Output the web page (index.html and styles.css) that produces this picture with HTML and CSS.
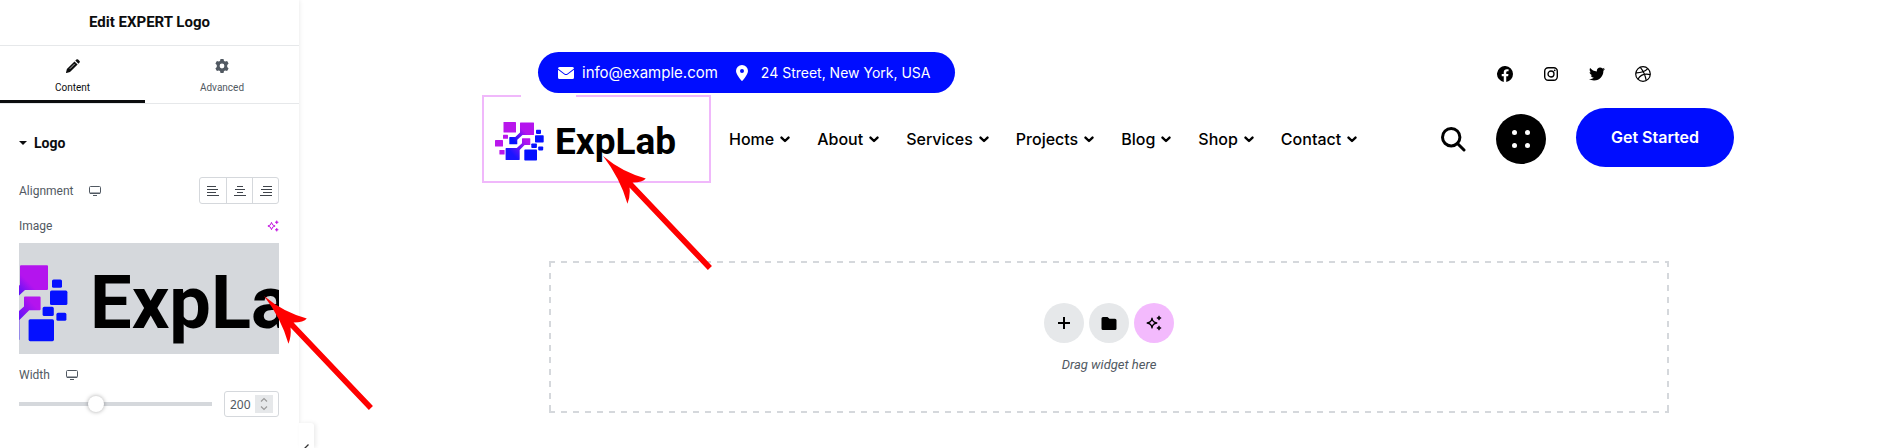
FILE: index.html
```html
<!DOCTYPE html>
<html lang="en">
<head>
<meta charset="utf-8">
<title>Edit EXPERT Logo</title>
<link rel="stylesheet" href="styles.css">
</head>
<body>
<svg class="defs" width="0" height="0" aria-hidden="true">
  <defs>
    <linearGradient id="link" gradientUnits="userSpaceOnUse" x1="510" y1="144" x2="527" y2="127"><stop offset=".2" stop-color="#0510ff"/><stop offset=".8" stop-color="#b414ee"/></linearGradient>
    <linearGradient id="link2" gradientUnits="userSpaceOnUse" x1="511" y1="156" x2="529" y2="139"><stop offset=".1" stop-color="#1b14ff"/><stop offset=".85" stop-color="#b414ee"/></linearGradient>
    <symbol id="logo" viewBox="492 110 186 60" overflow="visible">
      <g fill="#b917ec">
        <rect x="503.5" y="122" width="12.5" height="10.5" rx=".6"/>
        <rect x="503" y="134.8" width="5" height="4" rx=".6"/>
        <rect x="495" y="140" width="8" height="6.5" rx=".6"/>
        <rect x="499.4" y="150" width="5.2" height="4.6" rx=".6"/>
      </g>
      <path fill="url(#link)" d="M520.5 122.6H533.5Q534 122.6 534 123.1V134.4Q534 135 533.5 135H522.5L517.3 139.8V143.8Q517.3 144.3 516.8 144.3H509.8Q509.3 144.3 509.3 143.8V137.5Q509.3 137 509.8 137H515.3L520 132.4V123.1Q520 122.6 520.5 122.6Z"/>
      <path fill="url(#link2)" d="M522.5 138.3H529.8Q530.3 138.3 530.3 138.8V144.6Q530.3 145.1 529.8 145.1H524.6L519.7 150V159.6Q519.7 160 519.2 160H506.1Q505.6 160 505.6 159.5V148.5Q505.6 148 506.1 148H516.8L522 143.2V138.8Q522 138.3 522.5 138.3Z"/>
      <g fill="#0510ff">
        <rect x="536" y="129.7" width="5" height="4.2" rx=".8"/>
        <rect x="535" y="135.3" width="8.7" height="7.2" rx=".8"/>
        <rect x="531.3" y="143.4" width="5.6" height="4.6" rx=".8"/>
        <rect x="538.2" y="146.4" width="5" height="4" rx=".8"/>
        <rect x="524.3" y="149.6" width="12.7" height="11" rx=".8"/>
      </g>
      <text class="logo-text" x="555" y="154">ExpLab</text>
    </symbol>
    <symbol id="arrow" viewBox="0 0 108 113"><path fill="#f00" d="M0 0Q19 16 42 22Q39 26 29 26L107 108L103 112L26 31Q27 39 24 47Q17 22 0 0Z"/></symbol>
    <symbol id="monitor" viewBox="0 0 12 10"><path fill="none" stroke="currentColor" d="M1.5.5h9a1 1 0 0 1 1 1v5a1 1 0 0 1-1 1h-9a1 1 0 0 1-1-1v-5a1 1 0 0 1 1-1z"/><path fill="currentColor" d="M1 6.500h10v1.500H1zM4 9h4v1H4z"/></symbol>
    <symbol id="spark" viewBox="0 0 16 16"><path fill="none" stroke="currentColor" stroke-width="1.300" stroke-linejoin="round" d="M6 3.200Q6.600 7.400 10.800 8Q6.600 8.600 6 12.800Q5.400 8.600 1.200 8Q5.400 7.400 6 3.200Z"/><path fill="currentColor" d="M13 .8Q13.300 2.700 15.200 3Q13.300 3.300 13 5.200Q12.700 3.300 10.800 3Q12.700 2.700 13 .8ZM13 10.800Q13.300 12.700 15.200 13Q13.300 13.300 13 15.200Q12.700 13.300 10.800 13Q12.700 12.700 13 10.800Z" stroke="currentColor" stroke-width=".6"/></symbol>
    <symbol id="chev" viewBox="0 0 10 7"><path fill="none" stroke="currentColor" stroke-width="2.400" stroke-linecap="round" stroke-linejoin="round" d="M1.500 1.600L5 5L8.500 1.600"/></symbol>
  </defs>
</svg>
<div class="app">
  <aside class="panel">
    <h1 class="panel-title">Edit EXPERT Logo</h1>
    <div class="tabs" role="tablist">
      <button class="tab tab-active" role="tab" aria-selected="true">
        <svg width="14" height="14" viewBox="0 0 14 14"><path fill="currentColor" d="M9.300 1.600L12.400 4.700L13.500 3.600Q14.300 2.700 13.500 1.900L12.100.5Q11.300-.2 10.400.5ZM8.500 2.400L.9 10L0 13.500Q0 14 .5 14L4 13.100L11.600 5.500Z"/><path stroke="#fff" stroke-width=".7" d="M3.800 9.800L8.700 4.900" fill="none"/></svg>
        Content
      </button>
      <button class="tab" role="tab" aria-selected="false">
        <svg width="14" height="14" viewBox="0 0 14 14"><path fill="currentColor" fill-rule="evenodd" d="M5.500 0h3l.5 1.900 1.200.7L12.100 2l1.500 2.600-1.400 1.400v2l1.400 1.400-1.500 2.600-1.900-.6-1.200.7L8.500 14h-3L5 12.100l-1.200-.7-1.900.6L.4 9.400 1.800 8V6L.4 4.600 1.900 2l1.900.6L5 1.900ZM7 4.600a2.400 2.400 0 1 0 0 4.800a2.400 2.400 0 1 0 0-4.800Z"/></svg>
        Advanced
      </button>
    </div>
    <div class="controls">
      <button class="section-head"><span class="caret"></span>Logo</button>
      <div class="row align-row">
        <span class="label">Alignment</span>
        <svg class="device" width="12" height="10"><use href="#monitor"/></svg>
        <div class="align-group">
          <button aria-label="Left"><svg width="12" height="10" viewBox="0 0 12 10"><path stroke="currentColor" d="M0 .5h9M0 3.500h11M0 6.500h9M0 9.500h12"/></svg></button>
          <button aria-label="Center"><svg width="12" height="10" viewBox="0 0 12 10"><path stroke="currentColor" d="M3 .5h6M1 3.500h10M3 6.500h6M0 9.500h12"/></svg></button>
          <button aria-label="Right"><svg width="12" height="10" viewBox="0 0 12 10"><path stroke="currentColor" d="M3 .5h9M1 3.500h11M3 6.500h9M0 9.500h12"/></svg></button>
        </div>
      </div>
      <div class="row image-row">
        <span class="label">Image</span>
        <button class="ai" aria-label="Edit with AI"><svg width="12" height="12"><use href="#spark"/></svg></button>
      </div>
      <div class="preview"><svg width="372" height="120" role="img" aria-label="ExpLab"><use href="#logo"/></svg></div>
      <div class="row width-row">
        <label class="label" for="w">Width</label>
        <svg class="device" width="12" height="10"><use href="#monitor"/></svg>
      </div>
      <div class="row">
        <input class="slider" type="range" min="0" max="512" value="200" aria-label="Width slider">
        <div class="num"><input id="w" type="text" value="200"><svg width="18" height="18" viewBox="0 0 18 18"><path fill="#e6e8ea" d="M0 0h18v18H0z"/><path fill="none" stroke="#9a9a9a" stroke-width="1.200" d="M6 6.500l3-3 3 3M6 11.500l3 3 3-3"/></svg></div>
      </div>
    </div>
    <button class="collapse" aria-label="Hide panel"><svg width="5" height="8" viewBox="0 0 5 8"><path fill="none" stroke="#333" stroke-width="1.300" d="M4.500.5L1 4L4.500 7.500"/></svg></button>
    <svg class="arrow arrow-panel" width="110" height="115"><use href="#arrow"/></svg>
  </aside>
  <main class="canvas">
    <div class="topbar">
      <div class="contact">
        <svg width="16" height="12" viewBox="0 0 16 12"><path fill="#fff" d="M1.500 0h13Q16 0 16 1.500L9.200 6.700Q8 7.500 6.800 6.700L0 1.500Q0 0 1.500 0ZM0 2.800L6.300 7.500Q8 8.600 9.700 7.500L16 2.800V10.500Q16 12 14.500 12h-13Q0 12 0 10.500Z"/></svg>
        <a href="#">info@example.com</a>
        <svg class="pin" width="12" height="16" viewBox="0 0 12 16"><path fill="#fff" fill-rule="evenodd" d="M6 0a6 6 0 0 1 6 6Q12 9 6.700 15.600Q6 16.300 5.300 15.600Q0 9 0 6a6 6 0 0 1 6-6ZM6 4a2 2 0 1 0 0 4a2 2 0 1 0 0-4Z"/></svg>
        <span class="address">24 Street, New York, USA</span>
      </div>
      <div class="social">
        <a href="#" aria-label="Facebook"><svg width="16" height="16" viewBox="0 0 16 16"><path d="M16 8a8 8 0 1 0-9.250 7.900v-5.590H4.720V8h2.030V6.240c0-2 1.190-3.110 3.020-3.110.87 0 1.790.16 1.790.16v1.970h-1.010c-.99 0-1.300.62-1.300 1.250V8h2.220l-.35 2.310H9.250v5.590A8 8 0 0 0 16 8z"/></svg></a>
        <a href="#" aria-label="Instagram"><svg width="14" height="14" viewBox="0 0 14 14"><rect x=".7" y=".7" width="12.600" height="12.600" rx="3.500" fill="none" stroke="#000" stroke-width="1.400"/><circle cx="7" cy="7" r="3" fill="none" stroke="#000" stroke-width="1.300"/><circle cx="10.700" cy="3.300" r=".9"/></svg></a>
        <a href="#" aria-label="Twitter"><svg width="16" height="16" viewBox="0 0 512 512"><path d="M459.370 151.716c.325 4.548.325 9.097.325 13.645 0 138.720-105.583 298.558-298.558 298.558-59.452 0-114.680-17.219-161.137-47.106 8.447.974 16.568 1.299 25.340 1.299 49.055 0 94.213-16.568 130.274-44.832-46.132-.975-84.792-31.188-98.112-72.772 6.498.974 12.995 1.624 19.818 1.624 9.421 0 18.843-1.300 27.614-3.573-48.081-9.747-84.143-51.980-84.143-102.985v-1.299c13.969 7.797 30.214 12.670 47.431 13.319-28.264-18.843-46.781-51.005-46.781-87.391 0-19.492 5.197-37.360 14.294-52.954 51.655 63.675 129.300 105.258 216.365 109.807-1.624-7.797-2.599-15.918-2.599-24.040 0-57.828 46.782-104.934 104.934-104.934 30.213 0 57.502 12.670 76.670 33.137 23.715-4.548 46.456-13.320 66.599-25.340-7.798 24.366-24.366 44.833-46.132 57.827 21.117-2.273 41.584-8.122 60.426-16.243-14.292 20.791-32.161 39.308-52.628 54.253z"/></svg></a>
        <a href="#" aria-label="Dribbble"><svg width="16" height="16" viewBox="0 0 16 16"><g fill="none" stroke="#000" stroke-width="1.200"><circle cx="8" cy="8" r="7.300"/><path d="M5.300 1.300Q9.800 6.500 11.200 14.500M.8 6.800Q8.500 7 12.800 2.600M2.900 13.200Q6.500 6.800 15.200 8.600"/></g></svg></a>
      </div>
    </div>
    <header class="header">
      <a class="brand" href="#" aria-label="ExpLab"><svg width="186" height="60"><use href="#logo"/></svg></a>
      <nav class="nav">
        <a href="#">Home<svg width="10" height="7"><use href="#chev"/></svg></a>
        <a href="#">About<svg width="10" height="7"><use href="#chev"/></svg></a>
        <a href="#">Services<svg width="10" height="7"><use href="#chev"/></svg></a>
        <a href="#">Projects<svg width="10" height="7"><use href="#chev"/></svg></a>
        <a href="#">Blog<svg width="10" height="7"><use href="#chev"/></svg></a>
        <a href="#">Shop<svg width="10" height="7"><use href="#chev"/></svg></a>
        <a href="#">Contact<svg width="10" height="7"><use href="#chev"/></svg></a>
      </nav>
      <div class="actions">
        <button class="search" aria-label="Search"><svg width="25" height="25" viewBox="0 0 25 25"><circle cx="10.200" cy="10.200" r="8.700" fill="none" stroke="#000" stroke-width="3"/><path stroke="#000" stroke-width="3" stroke-linecap="round" d="M16.500 16.500L23 23"/></svg></button>
        <button class="dots" aria-label="Menu"><svg width="18" height="18" viewBox="0 0 18 18" fill="#fff"><circle cx="2.500" cy="2.500" r="2.500"/><circle cx="15.500" cy="2.500" r="2.500"/><circle cx="2.500" cy="15.500" r="2.500"/><circle cx="15.500" cy="15.500" r="2.500"/></svg></button>
        <a class="cta" href="#">Get Started</a>
      </div>
      <svg class="arrow arrow-brand" width="110" height="115"><use href="#arrow"/></svg>
    </header>
    <section class="dropzone">
      <div class="drop-buttons">
        <button aria-label="Add element"><svg width="12" height="12" viewBox="0 0 12 12"><path stroke="currentColor" stroke-width="2" d="M6 0v12M0 6h12"/></svg></button>
        <button aria-label="Add template"><svg width="16" height="13" viewBox="0 0 16 13"><path fill="currentColor" d="M2 0h4.500l2 1.800H14q1.500 0 1.500 1.500V11.500q0 1.500-1.500 1.500H2Q.5 13 .5 11.500v-10Q.5 0 2 0Z"/></svg></button>
        <button class="pink" aria-label="Build with AI"><svg width="16" height="16"><use href="#spark"/></svg></button>
      </div>
      <p>Drag widget here</p>
    </section>
  </main>
</div>
</body>
</html>
```
FILE: styles.css
```css
* { box-sizing: border-box; }
body { margin: 0; background: #fff; color: #0c0d0e; font-family: Roboto, sans-serif; }
button { margin: 0; padding: 0; border: 0; background: none; color: inherit; font: inherit; cursor: pointer; }
a { color: inherit; text-decoration: none; }
svg { display: block; flex: none; }
.defs { position: absolute; }
.app { display: flex; min-height: 100vh; }

.panel { position: relative; z-index: 1; flex: none; width: 299px; box-shadow: 0 0 5px rgba(0, 0, 0, .1); background: #fff; }
.panel-title { margin: 0; padding: 12px 0; border-bottom: 1px solid #e6e8ea; font-size: 15px; line-height: 21px; font-weight: 700; text-align: center; }
.tabs { display: grid; grid-template-columns: 145px 1fr; border-bottom: 1px solid #e6e8ea; }
.tab { display: flex; flex-direction: column; align-items: center; gap: 8px; padding: 13px 0 6px; border-bottom: 3px solid transparent; font-size: 10px; line-height: 13px; color: #515962; }
.tab-active { color: #0c0d0e; border-bottom-color: #0c0d0e; }
.controls { padding: 29px 20px 0 19px; }
.section-head { display: flex; align-items: center; gap: 7px; font-size: 14px; line-height: 20px; font-weight: 700; }
.caret { border: 4px solid transparent; border-top-color: currentColor; border-bottom: 0; }
.row { display: flex; align-items: center; }
.label { font-size: 12px; line-height: 16px; color: #515962; }
.device { margin-left: 16px; color: #515962; }
.align-row { margin-top: 24px; }
.align-group { display: flex; margin-left: auto; border: 1px solid #d5d8dc; border-radius: 3px; color: #3f444b; }
.align-group button { display: grid; place-items: center; width: 26px; height: 25px; }
.align-group button + button { border-left: 1px solid #d5d8dc; }
.image-row { justify-content: space-between; margin-top: 14px; }
.ai { color: #c00bdf; }
.preview { display: flex; height: 111px; margin-top: 9px; overflow: hidden; background: #d5d8dc; }
.preview svg { margin-left: -55px; margin-top: -3px; }
.width-row { margin: 13px 0 8px; }
.slider { flex: 1; min-width: 0; height: 16px; margin: 0 12px 0 0; appearance: none; background: linear-gradient(#d5d8dc, #d5d8dc) center / 100% 4px no-repeat; }
.slider::-webkit-slider-thumb { appearance: none; width: 16px; height: 16px; border-radius: 50%; background: #fff; box-shadow: 0 0 4px rgba(0, 0, 0, .35); }
.num { display: flex; align-items: center; justify-content: space-between; width: 55px; height: 26px; padding: 0 5px; border: 1px solid #d5d8dc; border-radius: 3px; }
.num input { width: 22px; padding: 0; border: 0; outline: 0; font: 12px "Noto Sans", sans-serif; color: #515962; }
.collapse { position: absolute; left: 100%; top: 423px; bottom: 0; width: 15px; padding: 21px 0 0 5px; display: flex; align-items: flex-start; overflow: hidden; border-radius: 0 3px 0 0; background: #fff; box-shadow: 2px 0 4px rgba(0, 0, 0, .08); }
.arrow { position: absolute; z-index: 2; }
.arrow-panel { left: 264px; top: 296px; }

.canvas { flex: 1; min-width: 0; padding-top: 52px; font-family: Inter, sans-serif; color: #000; }
.topbar { display: flex; align-items: center; justify-content: space-between; padding: 0 246px 0 239px; }
.contact { display: flex; align-items: center; height: 41px; padding: 0 24px 0 20px; border-radius: 21px; background: #000dff; color: #fff; font-size: 15px; white-space: nowrap; }
.contact a { margin: 0 18px 0 8px; }
.address { font-size: 14px; }
.pin { margin-right: 13px; }
.social { display: flex; gap: 30px; padding-top: 2px; }
.social a { display: grid; place-items: center; width: 16px; height: 16px; }
.header { position: relative; display: flex; align-items: center; padding: 0 163px 0 183px; margin-top: 2px; }
.brand { position: relative; flex: none; width: 229px; height: 88px; padding: 13px 8px; border: 2px solid #f0b8fb; }
.brand::before { content: ""; position: absolute; left: 37px; top: -2px; width: 55px; height: 2px; background: #fff; }
.logo-text { font: 700 37px Roboto, sans-serif; fill: #000; }
.nav { display: flex; gap: 27px; margin-left: 18px; font-size: 16px; font-weight: 500; }
.nav a { display: flex; align-items: center; gap: 6px; }
.actions { display: flex; align-items: center; gap: 30px; margin-left: auto; }
.dots { display: grid; place-items: center; width: 50px; height: 50px; border-radius: 50%; background: #000; }
.cta { margin-bottom: 4px; padding: 20px 35px; border-radius: 30px; background: #000dff; color: #fff; font-size: 16px; line-height: 19px; font-weight: 600; white-space: nowrap; }
.arrow-brand { left: 304px; top: 61px; }
.dropzone {
  --dash: #d5d8dc 0 6px, transparent 6px 12px;
  display: flex; flex-direction: column; align-items: center; margin: 78px 228px 0 250px; padding: 42px 0 40px; font-family: Roboto, sans-serif;
  background:
    repeating-linear-gradient(90deg, var(--dash)) top / 100% 2px no-repeat,
    repeating-linear-gradient(90deg, var(--dash)) bottom / 100% 2px no-repeat,
    repeating-linear-gradient(var(--dash)) left / 2px 100% no-repeat,
    repeating-linear-gradient(var(--dash)) right / 2px 100% no-repeat;
}
.drop-buttons { display: flex; gap: 5px; }
.drop-buttons button { display: grid; place-items: center; width: 40px; height: 40px; border-radius: 50%; background: #e6e8ea; }
.drop-buttons .pink { background: #f3bafd; }
.dropzone p { margin: 13px 0 0; font-size: 13px; line-height: 17px; font-style: italic; color: #515962; }
```
